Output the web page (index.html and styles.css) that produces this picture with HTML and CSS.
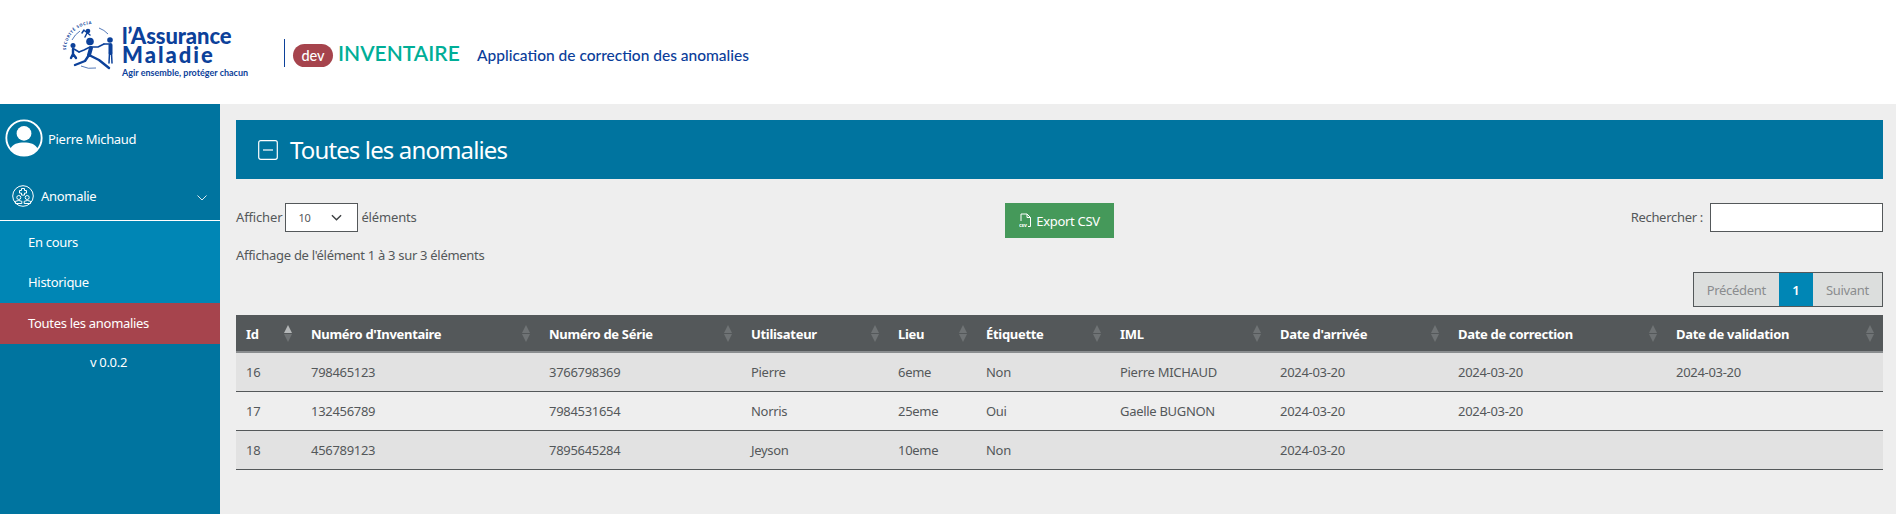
FILE: index.html
```html
<!DOCTYPE html>
<html lang="fr">
<head>
<meta charset="utf-8">
<title>Inventaire</title>
<link rel="stylesheet" href="styles.css">
</head>
<body>
<header class="top">
  <div class="logo">
    <svg class="logo-mark" viewBox="60 18 62 56" aria-hidden="true">
      <path class="arc" d="M99 28 A23 23 0 0 1 108 34"/>
      <path class="arc" d="M81 66 A24 24 0 0 0 96 68"/>
      <path class="arc" d="M72 40 A24 24 0 0 1 80 31"/>
      <path id="seal" class="none" d="M66 50 A26 26 0 0 1 92 24"/>
      <text class="seal-text"><textPath href="#seal">SÉCURITÉ SOCIALE</textPath></text>
      <circle class="fig" cx="90" cy="41.500" r="3.800"/>
      <path class="limb" d="M91 48 L89 55"/>
      <path class="limb-t" d="M90 47 L84 50 L79 52 M92 47 L98 47 L104 44"/>
      <path class="limb-m" d="M89 55 L85 61 L75 65"/>
      <path class="limb-m" d="M89 55 L99 60 L109 68"/>
      <circle class="fig" cx="73" cy="45.500" r="2.500"/>
      <path class="limb-m" d="M73 49 L73 54 L71 58 M73 54 L76 58"/>
      <path class="limb-t" d="M74 49 L79 52"/>
      <circle class="fig" cx="110" cy="40" r="2.800"/>
      <path class="limb" d="M110.500 45 L110.500 53"/>
      <path class="limb-t" d="M109.500 53 L109 63 M111.500 53 L112 63 M109 44 L104 44"/>
      <circle class="fig" cx="88" cy="31" r="2.300"/>
      <path class="limb-t" d="M87 33 L85 37 M85 31 L90 35 M84 30 L82 33"/>
    </svg>
    <div class="logo-text">
      <div class="logo-name">l’Assurance<br><span class="logo-second">Maladie</span></div>
      <div class="logo-tag">Agir ensemble, protéger chacun</div>
    </div>
  </div>
  <div class="brand">
    <span class="pill">dev</span>
    <span class="app">INVENTAIRE</span>
    <span class="sub">Application de correction des anomalies</span>
  </div>
</header>
<div class="shell">
  <aside class="side">
    <div class="user">
      <svg class="avatar" viewBox="0 0 37 37" aria-hidden="true">
        <circle class="av-ring" cx="18.500" cy="18.500" r="17.200"/>
        <circle class="av-fill" cx="18.500" cy="14" r="7.200"/>
        <path class="av-fill" d="M5 30 C7 24 13 23 18.500 23 C24 23 30 24 32 30 C28 34 23 36 18.500 36 C14 36 9 34 5 30 Z"/>
      </svg>
      <span>Pierre Michaud</span>
    </div>
    <div class="menu-head">
      <svg class="menu-icon" viewBox="0 0 22 22" aria-hidden="true">
        <circle class="ic" cx="11" cy="11" r="10.300"/>
        <path class="ic" d="M9.500 3.500h3v2h2v2.600h-2v2h-3v-2h-2V5.500h2z"/>
        <circle class="ic" cx="6.800" cy="12.500" r="2"/>
        <circle class="ic" cx="15.200" cy="12.500" r="2"/>
        <path class="ic" d="M3.500 18.500v-2.200q3.300-1.600 6.300 0v2.200zM12.200 18.500v-2.200q3.300-1.600 6.300 0v2.200z"/>
      </svg>
      <span class="menu-label">Anomalie</span>
      <svg class="chev" viewBox="0 0 10 6" aria-hidden="true"><path d="M.5.5 5 5 9.500.5"/></svg>
    </div>
    <nav class="sub-menu">
      <a class="item">En cours</a>
      <a class="item">Historique</a>
      <a class="item active">Toutes les anomalies</a>
    </nav>
    <div class="version">v 0.0.2</div>
  </aside>
  <main class="main">
    <div class="title-bar">
      <svg class="title-icon" viewBox="0 0 20 20" aria-hidden="true">
        <rect x=".7" y=".7" width="18.600" height="18.600" rx="2"/>
        <path d="M5 10h10"/>
      </svg>
      <h1>Toutes les anomalies</h1>
    </div>
    <div class="controls">
      <div class="ctl ctl-left">
        <div class="length">
          Afficher
          <span class="select"><span>10</span>
            <svg class="sel-chev" viewBox="0 0 12 7" aria-hidden="true"><path d="M1 1l5 5 5-5"/></svg>
          </span>
          éléments
        </div>
        <div class="info">Affichage de l'élément 1 à 3 sur 3 éléments</div>
      </div>
      <div class="ctl ctl-mid">
        <button class="csv" type="button">
          <svg class="csv-icon" viewBox="0 0 13 15" aria-hidden="true">
            <path d="M2 8V1h6l3.500 3.500V13.500H9"/><path d="M8 1v3.500h3.500"/>
            <text x="0" y="14" class="csv-t">csv</text>
          </svg>
          Export CSV
        </button>
      </div>
      <div class="ctl ctl-right">
        <label class="search">Rechercher : <input type="text"></label>
        <div class="pager">
          <span class="pg">Précédent</span><span class="pg cur">1</span><span class="pg">Suivant</span>
        </div>
      </div>
    </div>
    <table class="grid">
      <colgroup>
        <col class="c1"><col class="c2"><col class="c3"><col class="c4"><col class="c5"><col class="c6"><col class="c7"><col class="c8"><col class="c9"><col class="c10">
      </colgroup>
      <thead>
        <tr>
          <th class="asc">Id</th>
          <th>Numéro d'Inventaire</th>
          <th>Numéro de Série</th>
          <th>Utilisateur</th>
          <th>Lieu</th>
          <th>Étiquette</th>
          <th>IML</th>
          <th>Date d'arrivée</th>
          <th>Date de correction</th>
          <th>Date de validation</th>
        </tr>
      </thead>
      <tbody>
        <tr class="odd"><td>16</td><td>798465123</td><td>3766798369</td><td>Pierre</td><td>6eme</td><td>Non</td><td>Pierre MICHAUD</td><td>2024-03-20</td><td>2024-03-20</td><td>2024-03-20</td></tr>
        <tr><td>17</td><td>132456789</td><td>7984531654</td><td>Norris</td><td>25eme</td><td>Oui</td><td>Gaelle BUGNON</td><td>2024-03-20</td><td>2024-03-20</td><td></td></tr>
        <tr class="odd"><td>18</td><td>456789123</td><td>7895645284</td><td>Jeyson</td><td>10eme</td><td>Non</td><td></td><td>2024-03-20</td><td></td><td></td></tr>
      </tbody>
    </table>
  </main>
</div>
</body>
</html>
```
FILE: styles.css
```css
* { box-sizing: border-box; }
html, body { margin: 0; height: 100%; }
body {
  display: flex;
  flex-direction: column;
  height: 100vh;
  overflow: hidden;
  background: #eeeeee;
  color: #54585a;
  font-family: "Noto Sans", sans-serif;
  font-size: 13px;
  letter-spacing: -0.3px;
}

/* header */
.top {
  flex: 0 0 104px;
  background: #fff;
  display: flex;
  align-items: flex-start;
  padding: 18px 0 0 60px;
  color: #0c419a;
  letter-spacing: 0;
}
.logo { display: flex; width: 224px; }
.logo-mark { width: 62px; height: 56px; flex: none; }
.none { fill: none; }
.arc { fill: none; stroke: #0c419a; stroke-width: .7; }
.fig { fill: #0c419a; }
.limb, .limb-t, .limb-m { fill: none; stroke: #0c419a; stroke-linecap: round; stroke-linejoin: round; }
.limb { stroke-width: 4; }
.limb-m { stroke-width: 2.400; }
.limb-t { stroke-width: 1.500; }
.seal-text { font: 700 4px "Noto Sans", sans-serif; fill: #0c419a; letter-spacing: .6px; }
.logo-text { padding-top: 8px; }
.logo-name { font: 900 22px/19px Lato, sans-serif; letter-spacing: -.1px; }
.logo-second { letter-spacing: 2px; }
.logo-tag { font: 700 9px/12px Lato, sans-serif; margin-top: 3px; white-space: nowrap; }
.brand {
  display: flex;
  align-items: center;
  height: 28px;
  margin-top: 21px;
  padding-left: 8px;
  border-left: 1px solid #0c419a;
}
.pill {
  width: 40px; height: 23px;
  border-radius: 12px;
  background: #a6444d;
  color: #fff;
  font: 500 14.500px/23px Lato, sans-serif;
  text-align: center;
  margin-top: 5px;
}
.app { margin-left: 5px; color: #00ae97; font: 600 21px/28px Lato, sans-serif; width: 139px; white-space: nowrap; }
.sub { font: 500 15.500px/20px Lato, sans-serif; margin-top: 3px; white-space: nowrap; color: #0a3d9a; }

/* sidebar */
.shell { flex: 1; display: flex; min-height: 0; }
.side { flex: 0 0 220px; background: #00749f; color: #fff; }
.user { display: flex; align-items: center; height: 70px; padding: 0 0 0 5px; gap: 5px; }
.avatar { width: 38px; height: 38px; margin-bottom: 2px; }
.av-ring { fill: none; stroke: #fff; stroke-width: 1.800; }
.av-fill { fill: #fff; }
.menu-head { display: flex; align-items: center; height: 47px; padding: 0 13px 2px 12px; border-bottom: 1px solid #fff; }
.menu-icon { width: 22px; height: 22px; }
.ic { fill: none; stroke: #fff; stroke-width: 1; }
.menu-label { margin-left: 7px; flex: 1; }
.chev { width: 10px; height: 6px; margin-top: 4px; }
.chev path { fill: none; stroke: #dce9ee; stroke-width: 1; }
.sub-menu { background: #0086b5; display: flex; flex-direction: column; padding-top: 2px; }
.item { display: flex; align-items: center; height: 40px; padding: 0 0 2px 28px; color: #fff; }
.active { background: #a6444d; height: 41px; }
.version { text-align: center; padding-top: 9px; padding-right: 3px; }

/* main */
.main { flex: 1; min-width: 0; padding: 16px 13px 0 16px; }
.title-bar { height: 59px; background: #00749f; color: #fff; display: flex; align-items: center; padding-left: 22px; gap: 12px; }
.title-icon { width: 20px; height: 20px; }
.title-icon rect, .title-icon path { fill: none; stroke: #fff; stroke-width: 1.200; }
h1 { margin: 0; font-size: 24px; font-weight: 400; letter-spacing: -.87px; }
.controls { display: grid; grid-template-columns: 1fr auto 1fr; margin-top: 24px; height: 105px; }
.length { display: flex; align-items: center; margin-top: -2px; gap: 3px; letter-spacing: -.15px; }
.select { width: 73px; height: 29px; margin-top: 2px; background: #fff; border: 1px solid #54585a; display: flex; align-items: center; justify-content: space-between; padding: 0 15px 0 12px; font-size: 11px; letter-spacing: -.3px; }
.sel-chev { width: 11px; height: 7px; }
.sel-chev path { fill: none; stroke: #3c3f41; stroke-width: 1.500; }
.info { margin-top: 14px; }
.csv { display: flex; align-items: center; justify-content: center; gap: 4px; width: 109px; height: 35px; background: #45995a; color: #fff; border: 0; padding: 0; font: inherit; letter-spacing: inherit; }
.csv-icon { width: 13px; height: 15px; }
.csv-icon path { fill: none; stroke: #fff; stroke-width: 1; }
.csv-t { font: 700 5px "Noto Sans", sans-serif; fill: #fff; letter-spacing: 0; }
.ctl-right { display: flex; flex-direction: column; align-items: flex-end; }
.search { display: flex; align-items: center; gap: 7px; margin-top: -2px; }
.search input { width: 173px; height: 29px; margin: 2px 0 0; border: 1px solid #54585a; background: #fff; padding: 0; }
.pager { display: flex; margin-top: 40px; height: 35px; border: 1px solid #54585a; background: #dcdedd; color: #8a8c8e; }
.pg { display: flex; align-items: center; justify-content: center; padding: 0 13px; }
.pg.cur { background: #0086b5; color: #fff; width: 34px; padding: 0; font-weight: 600; }

/* table */
.grid { width: 1647px; table-layout: fixed; border-collapse: collapse; margin-top: 7px; }
.c1 { width: 65px; } .c2 { width: 238px; } .c3 { width: 202px; } .c4 { width: 147px; } .c5 { width: 88px; }
.c6 { width: 134px; } .c7 { width: 160px; } .c8 { width: 178px; } .c9 { width: 218px; } .c10 { width: 217px; }
th {
  position: relative;
  height: 37px;
  background: #54585a;
  color: #fff;
  text-align: left;
  padding: 2px 10px 0;
  border-bottom: 2px solid #8a8d8f;
  font-weight: 700;
}
th::before, th::after {
  content: "";
  position: absolute;
  right: 9px;
  border-left: 4.500px solid transparent;
  border-right: 4.500px solid transparent;
}
th::before { top: 10px; border-bottom: 8px solid #6f7375; }
th::after { top: 19px; border-top: 8px solid #6f7375; }
.asc::before { border-bottom-color: #b4b7b8; }
td { height: 39px; padding: 1px 10px 0; border-bottom: 1px solid #54585a; }
.odd td { background: #e2e2e2; }
```
